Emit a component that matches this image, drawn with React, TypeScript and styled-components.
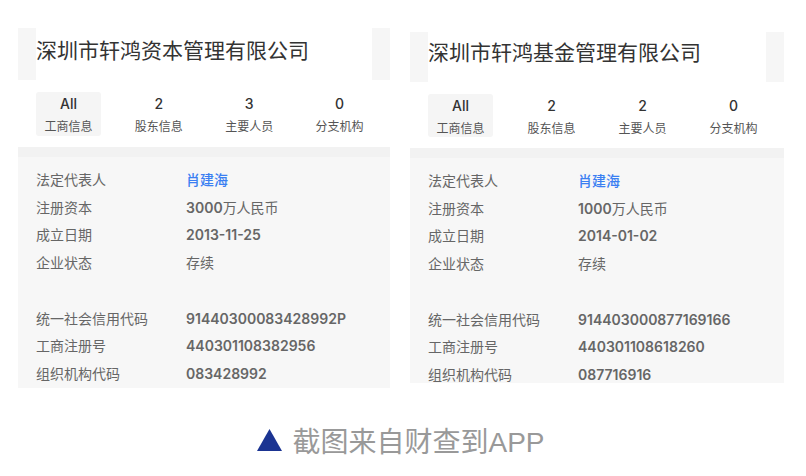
import React from "react";
import styled, { createGlobalStyle } from "styled-components";

interface Tab {
  count: string;
  label: string;
}

interface Field {
  label: string;
  value: string;
  link?: boolean;
}

interface Company {
  name: string;
  tabs: Tab[];
  basic: Field[];
  codes: Field[];
  top: number;
  titleHeight: number;
  titleLift: number;
  tabHeight: number;
  infoHeight: number;
  width: number;
}

const companies: Company[] = [
  {
    name: "深圳市轩鸿资本管理有限公司",
    tabs: [
      { count: "All", label: "工商信息" },
      { count: "2", label: "股东信息" },
      { count: "3", label: "主要人员" },
      { count: "0", label: "分支机构" },
    ],
    basic: [
      { label: "法定代表人", value: "肖建海", link: true },
      { label: "注册资本", value: "3000万人民币" },
      { label: "成立日期", value: "2013-11-25" },
      { label: "企业状态", value: "存续" },
    ],
    codes: [
      { label: "统一社会信用代码", value: "91440300083428992P" },
      { label: "工商注册号", value: "440301108382956" },
      { label: "组织机构代码", value: "083428992" },
    ],
    top: 28,
    titleHeight: 52,
    titleLift: 10,
    tabHeight: 44,
    infoHeight: 231,
    width: 372,
  },
  {
    name: "深圳市轩鸿基金管理有限公司",
    tabs: [
      { count: "All", label: "工商信息" },
      { count: "2", label: "股东信息" },
      { count: "2", label: "主要人员" },
      { count: "0", label: "分支机构" },
    ],
    basic: [
      { label: "法定代表人", value: "肖建海", link: true },
      { label: "注册资本", value: "1000万人民币" },
      { label: "成立日期", value: "2014-01-02" },
      { label: "企业状态", value: "存续" },
    ],
    codes: [
      { label: "统一社会信用代码", value: "914403000877169166" },
      { label: "工商注册号", value: "440301108618260" },
      { label: "组织机构代码", value: "087716916" },
    ],
    top: 32,
    titleHeight: 50,
    titleLift: 13,
    tabHeight: 43,
    infoHeight: 225,
    width: 374,
  },
];

const GlobalStyle = createGlobalStyle`
  body {
    margin: 0;
    background: #fff;
    font-family: "Noto Sans CJK SC", "Noto Sans", sans-serif;
  }
`;

// digits / latin parts are set heavier than the chinese characters
const renderValue = (value: string) =>
  value
    .split(/([0-9A-Za-z-]+)/)
    .filter(Boolean)
    .map((part, i) =>
      /[0-9A-Za-z]/.test(part) ? <Num key={i}>{part}</Num> : <span key={i}>{part}</span>
    );

const CompanyCard = ({ company }: { company: Company }) => (
  <Card $top={company.top} $width={company.width}>
    <TitleBar $height={company.titleHeight}>
      <TitleBox $lift={company.titleLift}>{company.name}</TitleBox>
    </TitleBar>
    <TabRow>
      {company.tabs.map((tab, i) => (
        <TabItem key={tab.label} $active={i === 0} $height={company.tabHeight}>
          <TabCount>{tab.count}</TabCount>
          <TabLabel>{tab.label}</TabLabel>
        </TabItem>
      ))}
    </TabRow>
    <Divider />
    <Info $height={company.infoHeight}>
      {company.basic.map((f) => (
        <Row key={f.label}>
          <Label>{f.label}</Label>
          <Value $link={f.link}>{renderValue(f.value)}</Value>
        </Row>
      ))}
      <Spacer />
      {company.codes.map((f) => (
        <Row key={f.label}>
          <Label>{f.label}</Label>
          <Value>{renderValue(f.value)}</Value>
        </Row>
      ))}
    </Info>
  </Card>
);

const App = () => (
  <Page>
    <GlobalStyle />
    <Cards>
      {companies.map((c) => (
        <CompanyCard key={c.name} company={c} />
      ))}
    </Cards>
    <Footer>
      <Triangle viewBox="0 0 25 22" width="25" height="22">
        <polygon points="12.5,0 25,22 0,22" fill="#1b3492" />
      </Triangle>
      <FooterText>截图来自财查到APP</FooterText>
    </Footer>
  </Page>
);

const Page = styled.div`
  width: 806px;
  height: 476px;
  display: flex;
  flex-direction: column;
`;

const Cards = styled.div`
  display: flex;
  align-items: flex-start;
  gap: 20px;
  padding: 0 22px 0 18px;
`;

const Card = styled.div<{ $top: number; $width: number }>`
  margin-top: ${(p) => p.$top}px;
  width: ${(p) => p.$width}px;
  background: #fff;
`;

const TitleBar = styled.div<{ $height: number }>`
  height: ${(p) => p.$height}px;
  background: #f6f6f6;
  padding: 0 18px;
  display: flex;
`;

const TitleBox = styled.div<{ $lift: number }>`
  flex: 1;
  background: #fff;
  display: flex;
  align-items: center;
  padding-bottom: ${(p) => p.$lift}px;
  font-size: 21px;
  color: #333;
  white-space: nowrap;
`;

const TabRow = styled.div`
  display: flex;
  justify-content: space-between;
  padding: 12px 18px 0;
  margin-bottom: 11px;
`;

const TabItem = styled.div<{ $active: boolean; $height: number }>`
  width: 65px;
  height: ${(p) => p.$height}px;
  box-sizing: border-box;
  padding-top: 3px;
  border-radius: 3px;
  background: ${(p) => (p.$active ? "#f5f5f5" : "transparent")};
  display: flex;
  flex-direction: column;
  align-items: center;
  gap: 5px;
`;

const TabCount = styled.div`
  font-family: Inter, "Noto Sans CJK SC", sans-serif;
  font-weight: 500;
  font-size: 14px;
  line-height: 18px;
  color: #333;
`;

const TabLabel = styled.div`
  font-size: 12px;
  line-height: 16px;
  color: #555;
`;

const Divider = styled.div`
  height: 10px;
  background: #f2f2f2;
`;

const Info = styled.div<{ $height: number }>`
  height: ${(p) => p.$height}px;
  overflow: hidden;
  box-sizing: border-box;
  background: #f7f7f7;
  padding: 8px 18px 0;
`;

const Row = styled.div`
  display: flex;
  height: 27.7px;
  align-items: center;
  font-size: 14px;
`;

const Spacer = styled.div`
  height: 28px;
`;

const Label = styled.div`
  width: 150px;
  flex-shrink: 0;
  color: #666;
`;

const Value = styled.div<{ $link?: boolean }>`
  font-weight: ${(p) => (p.$link ? 500 : 400)};
  color: ${(p) => (p.$link ? "#3b7ff2" : "#666")};
`;

const Num = styled.span`
  font-family: Inter, "Noto Sans CJK SC", sans-serif;
  font-weight: 600;
`;

const Footer = styled.div`
  margin-top: 32px;
  height: 40px;
  display: flex;
  align-items: center;
  justify-content: center;
  gap: 10px;
  padding-right: 4px;
`;

const Triangle = styled.svg`
  display: block;
`;

const FooterText = styled.div`
  font-family: "Liberation Sans", "Noto Sans CJK SC", sans-serif;
  font-size: 28px;
  color: #999;
`;

export default App;
